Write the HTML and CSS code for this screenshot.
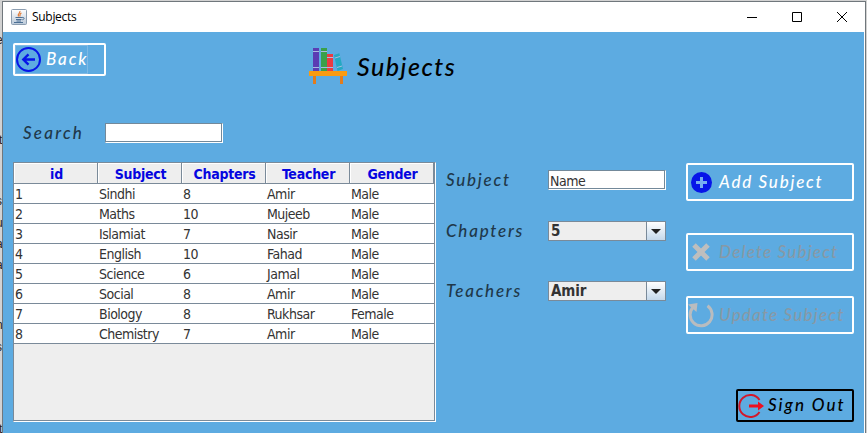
FILE: index.html
```html
<!DOCTYPE html>
<html lang="en">
<head>
<meta charset="utf-8">
<title>Subjects</title>
<link rel="stylesheet" href="styles.css">
</head>
<body>
<div class="desktop">
  <aside class="behind" aria-hidden="true">
    <span class="bit b1">e</span><span class="bit b2">f</span><span class="bit b3">t</span><span class="bit b4">s</span><span class="bit b5">u</span><span class="bit b6">a</span><span class="bit b7">a</span><span class="bit b8">n</span><span class="bit b9">s</span><span class="bit b10">t</span>
  </aside>
  <div class="window">
    <header class="titlebar">
      <svg class="java" viewBox="0 0 16 16"><defs><linearGradient id="jg" x1="0" y1="0" x2="0" y2="1"><stop offset="0" stop-color="#fff"/><stop offset="1" stop-color="#b9c8d8"/></linearGradient></defs><rect x=".5" y=".5" width="15" height="15" rx="1" fill="url(#jg)" stroke="#8b9db0"/><path d="M8.800 2C10 4 6 4.500 7.500 7.500M10.500 4C8 5 9.500 6 8.700 7.500" fill="none" stroke="#e07a36" stroke-width="1.200"/><path d="M4.500 8.500h6.500M5 10.500h5.500M5.500 12h4.500M3 13.500h9M11 8.500c3-.5 2.500 2 .3 2.300" fill="none" stroke="#4b6f94"/></svg>
      <span class="title">Subjects</span>
      <div class="controls">
        <svg viewBox="0 0 10 10"><path d="M0 5.500h10"/></svg>
        <svg viewBox="0 0 10 10"><path d="M.5.5h9v9h-9z"/></svg>
        <svg viewBox="0 0 10 10"><path d="M0 0l10 10M10 0L0 10"/></svg>
      </div>
    </header>
    <main class="content">
      <div class="top">
        <button class="btn back"><span class="focus"><svg width="26" height="26" viewBox="0 0 26 26"><circle cx="12.500" cy="12.500" r="11.500" fill="none" stroke="#0715e8" stroke-width="2"/><path d="M19 12.500H8M12.500 7.300L7.300 12.500l5.200 5.200" fill="none" stroke="#0715e8" stroke-width="2.400"/></svg><span class="script">Back</span></span></button>
        <div class="heading">
          <svg width="40" height="40" viewBox="0 0 40 40"><path fill="#5b3db3" d="M4 1h6v23H4z"/><path fill="#3aa04a" d="M12 1h6v23h-6z"/><path fill="#e93b42" d="M18 7h6v17h-6z"/><path fill="#24a9c2" d="M25 8l5.300-1.800L34 22l-5.500 2z"/><path stroke="#a9bce0" d="M4 4.500h6M4 20.500h6M12 4.500h6M12 20.500h6M18 10.500h6M18 20.500h6M26 11l5-1.500M28 20.500l5-1.500" fill="none"/><path fill="#f99b12" d="M0 24h38v5H0z"/><path fill="#e27c1d" d="M4 29h3v8H4zM31 29h3v8h-3z"/></svg>
          <h1 class="script">Subjects</h1>
        </div>
      </div>
      <div class="search"><label class="script">Search</label><span class="field"></span></div>
      <div class="body">
        <div class="scroll">
          <table>
            <thead><tr><th>id</th><th>Subject</th><th>Chapters</th><th>Teacher</th><th>Gender</th></tr></thead>
            <tbody>
              <tr><td>1</td><td>Sindhi</td><td>8</td><td>Amir</td><td>Male</td></tr>
              <tr><td>2</td><td>Maths</td><td>10</td><td>Mujeeb</td><td>Male</td></tr>
              <tr><td>3</td><td>Islamiat</td><td>7</td><td>Nasir</td><td>Male</td></tr>
              <tr><td>4</td><td>English</td><td>10</td><td>Fahad</td><td>Male</td></tr>
              <tr><td>5</td><td>Science</td><td>6</td><td>Jamal</td><td>Male</td></tr>
              <tr><td>6</td><td>Social</td><td>8</td><td>Amir</td><td>Male</td></tr>
              <tr><td>7</td><td>Biology</td><td>8</td><td>Rukhsar</td><td>Female</td></tr>
              <tr><td>8</td><td>Chemistry</td><td>7</td><td>Amir</td><td>Male</td></tr>
            </tbody>
          </table>
        </div>
        <form class="form">
          <div class="row"><label class="script">Subject</label><span class="field">Name</span></div>
          <div class="row"><label class="script">Chapters</label><span class="combo"><b>5</b><i><svg width="10" height="5" viewBox="0 0 10 5"><path d="M0 0h10L5 5z"/></svg></i></span></div>
          <div class="row"><label class="script">Teachers</label><span class="combo"><b>Amir</b><i><svg width="10" height="5" viewBox="0 0 10 5"><path d="M0 0h10L5 5z"/></svg></i></span></div>
        </form>
        <nav class="actions">
          <button type="button" class="btn add"><svg width="26" height="26" viewBox="0 0 26 26"><circle cx="13.500" cy="13.500" r="10.500" fill="#0715e8"/><path d="M13.500 8v11M8 13.500h11" stroke="#77aef0" stroke-width="3"/></svg><span class="script">Add Subject</span></button>
          <button type="button" class="btn delete off"><svg width="26" height="26" viewBox="0 0 26 26"><path d="M6 6l14 14M20 6L6 20" stroke="#bebebe" stroke-width="5"/></svg><span class="script">Delete Subject</span></button>
          <button type="button" class="btn update off"><svg width="26" height="26" viewBox="0 0 26 26"><path d="M19.500 3.800A11 11 0 1 1 5.500 4.800" fill="none" stroke="#b9bcbf" stroke-width="3"/><path d="M0 2.500L9.500 1 8.500 10z" fill="#b9bcbf"/></svg><span class="script">Update Subject</span></button>
          <button type="button" class="btn signout"><svg width="28" height="26" viewBox="0 0 28 26"><path d="M21.500 7A11 11 0 1 0 21.500 19" fill="none" stroke="#d3172a" stroke-width="2"/><path d="M11 11.500h9V8.500l6 4.500-6 4.500v-3h-9z" fill="#ed1020"/></svg><span class="script">Sign Out</span></button>
        </nav>
      </div>
    </main>
  </div>
</div>
</body>
</html>
```
FILE: styles.css
```css
* { box-sizing: border-box; }
body { margin: 0; overflow: hidden; font-family: "DejaVu Sans Condensed", "DejaVu Sans", sans-serif; color: #333; }
.desktop { position: relative; width: 867px; height: 433px; padding: 1px 1px 0 2px; background: #d2d2d2; overflow: hidden; }
.window { position: relative; height: 433px; border: 1px solid #70777c; border-bottom: 0; background: #fff; padding-right: 1px; }
.bit { position: absolute; left: -4px; font: 12px "Liberation Sans", sans-serif; color: #222; }
.b1 { top: 33px; } .b2 { top: 91px; } .b3 { top: 133px; left: -1px; } .b4 { top: 194px; } .b5 { top: 216px; }
.b6 { top: 237px; } .b7 { top: 258px; } .b8 { top: 318px; } .b9 { top: 340px; } .b10 { top: 422px; left: -1px; }
.titlebar { display: flex; align-items: center; height: 30px; padding-left: 8px; background: #fff; }
.java { width: 16px; height: 16px; margin-top: -1px; }
.title { margin: -1px 0 0 5px; font: 12px "Open Sans", sans-serif; letter-spacing: -.3px; color: #000; }
.controls { display: flex; gap: 35px; margin: -1px 17px 0 auto; }
.controls svg { width: 10px; height: 10px; fill: none; stroke: #000; stroke-width: 1; }
.content { height: 402px; padding: 11px 10px 0; background: #5dabe1; }
.script { font-family: Lato, sans-serif; font-style: italic; font-weight: 500; font-size: 17px; line-height: 22px; letter-spacing: 1.2px; white-space: nowrap; }
.top { display: flex; align-items: flex-start; height: 80px; }
.btn { display: flex; align-items: center; margin: 0; padding: 0; border: 2px solid #fff; border-radius: 2px; background: #5dabe1; color: #fff; }
.btn svg { flex: none; }
.back { width: 93px; height: 33px; }
.focus { display: flex; align-items: center; width: 73px; height: 29px; border: 1px solid #7fb9e5; }
.back .script { margin: -2px 0 0 4px; letter-spacing: 1.9px; }
.heading { display: flex; align-items: center; margin: 4px 0 0 203px; }
h1.script { margin: -3px 0 0 8px; font-size: 25px; line-height: 34px; letter-spacing: 1.5px; color: #000; }
.search { display: flex; align-items: center; height: 20px; padding-left: 10px; }
.search label { width: 82px; letter-spacing: 2.2px; color: #20384a; }
.field { display: block; width: 118px; height: 20px; padding-left: 1px; border: 1px solid #fff; border-top-color: #73899a; border-left-color: #73899a; box-shadow: inset -1px -1px #73899a; background: #fff; font-size: 14px; line-height: 21px; letter-spacing: -.5px; }
.body { display: flex; margin-top: 19px; height: 271px; }
.scroll { width: 423px; height: 260px; border: 1px solid #7a8a99; border-right-color: #fff; border-bottom-color: #fff; box-shadow: inset -1px -1px #7a8a99; background: #eee; }
table { width: 420px; table-layout: fixed; border-collapse: separate; border-spacing: 0; }
th, td { line-height: 17px; white-space: nowrap; }
th { height: 21px; padding: 2px 0 0 2px; border-right: 1px solid #7a8a99; border-bottom: 1px solid #7a8a99; box-shadow: inset 1px 1px #fff; color: #0505e0; font-size: 14px; letter-spacing: -.25px; }
td { height: 20px; padding: 2px 0 0 1px; border-bottom: 1px solid #7a8a99; background: #fff; font-size: 14px; letter-spacing: -.5px; }
.form { width: 220px; margin: 8px 0 0 10px; }
.row { display: flex; align-items: center; height: 20px; }
.row + .row { margin-top: 31px; }
.row + .row + .row { margin-top: 40px; }
.row label { width: 102px; letter-spacing: 1.75px; color: #20384a; }
.combo { display: flex; width: 118px; height: 20px; border: 1px solid #7a8a99; background: #eee; }
.combo b { flex: 1; padding-left: 2px; font: bold 15px/18px "DejaVu Sans Condensed", "DejaVu Sans", sans-serif; letter-spacing: -.1px; }
.combo i { display: flex; align-items: center; justify-content: center; width: 19px; border-left: 1px solid #7a8a99; background: linear-gradient(#fff, #c4d8eb); }
.combo path { fill: #222; }
.actions { display: flex; flex-direction: column; width: 168px; margin: 1px 0 0 20px; }
.actions .btn { width: 168px; height: 38px; }
.actions .script { margin-left: 5px; }
.actions .add .script { letter-spacing: 1.75px; }
.actions .delete { margin-top: 32px; }
.actions .update { margin-top: 25px; }
.off { color: #8799a6; }
.actions .signout { width: 118px; height: 33px; margin: 55px 0 0 50px; border-color: #000; color: #000; }
.actions .signout .script { margin: -2px 0 0 2px; letter-spacing: 2px; }
```
